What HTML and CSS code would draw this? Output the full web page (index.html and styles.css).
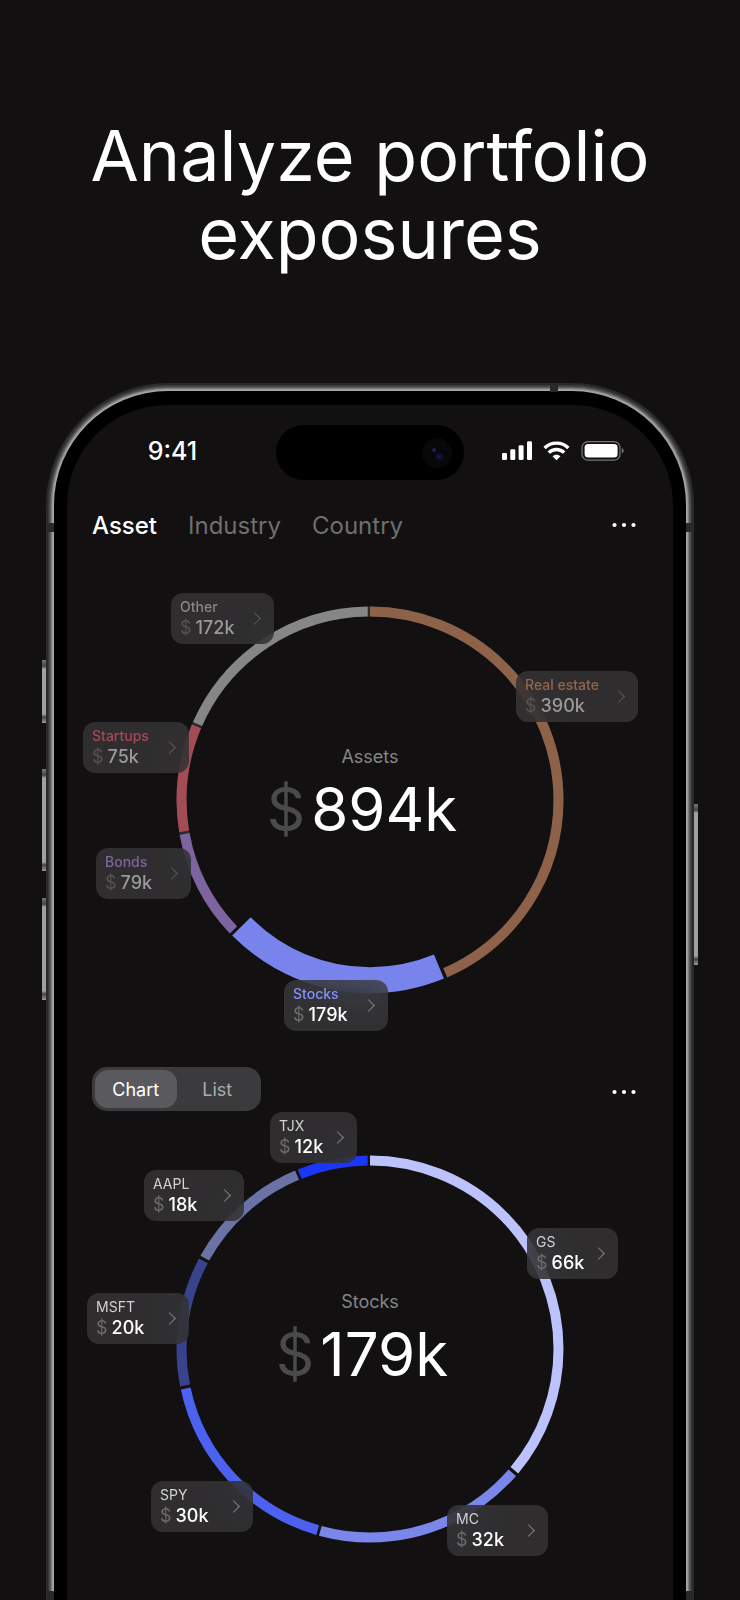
FILE: index.html
```html
<!DOCTYPE html>
<html lang="en">
<head>
  <meta charset="utf-8">
  <meta name="viewport" content="width=device-width, initial-scale=1">
  <title>Analyze portfolio exposures</title>
  <link rel="stylesheet" href="styles.css">
</head>
<body>
  <h1>Analyze portfolio<br>exposures</h1>

  <main class="phone">
    <span class="side-button action"></span>
    <span class="side-button volume-up"></span>
    <span class="side-button volume-down"></span>
    <span class="side-button power"></span>
    <span class="band band-top"></span>
    <span class="band band-left"></span>
    <span class="band band-right"></span>
    <span class="band band-left band-low"></span>
    <span class="band band-right band-low"></span>

    <div class="screen">
      <header class="status">
        <span class="time">9:41</span>
        <div class="island"><span class="camera"></span></div>
        <svg class="status-icons" width="122" height="20" viewBox="0 0 122 20">
          <g fill="#fff">
            <rect x="0" y="12" width="5" height="7" rx="1.3"/>
            <rect x="8.3" y="8.3" width="5" height="10.7" rx="1.3"/>
            <rect x="16.6" y="4.3" width="5" height="14.7" rx="1.3"/>
            <rect x="25" y="0.3" width="5" height="18.7" rx="1.3"/>
            <path d="M54.5 13.8c1.6 0 3 .6 4 1.500l-4 4-4-4c1-.9 2.400-1.500 4-1.500z"/>
            <rect x="82.600" y="3" width="33" height="13.600" rx="3.600"/>
          </g>
          <g fill="none" stroke="#fff" stroke-width="3.400">
            <path d="M42.600 7a17 17 0 0 1 23.800 0"/>
            <path d="M46.800 11.600a11 11 0 0 1 15.400 0"/>
          </g>
          <rect x="80" y="0.600" width="38" height="18.600" rx="6" fill="none" stroke="#77767a" stroke-width="1.200"/>
          <path d="M119.800 7v5.600c1.200-.5 1.900-1.600 1.900-2.800s-.7-2.300-1.900-2.800z" fill="#77767a"/>
        </svg>
      </header>

      <nav class="row">
        <div class="tabs">
          <button class="tab active">Asset</button>
          <button class="tab">Industry</button>
          <button class="tab">Country</button>
        </div>
        <button class="more" aria-label="More options">
          <svg width="24" height="6" viewBox="0 0 24 6" fill="#fff"><circle cx="2.500" cy="3" r="2.100"/><circle cx="12" cy="3" r="2.100"/><circle cx="21.500" cy="3" r="2.100"/></svg>
        </button>
      </nav>

      <section class="chart assets">
        <svg class="ring" viewBox="0 0 388 388">
          <circle class="track" cx="194" cy="194" r="188.500" stroke-width="10"/>
          <g fill="none" stroke-width="10" transform="rotate(-90 194 194)">
            <circle cx="194" cy="194" r="188.500" pathLength="360" stroke="#8e6149" stroke-dasharray="156.500 360"/>
            <circle cx="194" cy="194" r="180" pathLength="360" stroke="#121011" stroke-width="28" stroke-dasharray="70 360" stroke-dashoffset="-156.500"/>
            <circle cx="194" cy="194" r="180.200" pathLength="360" stroke="#7884ec" stroke-width="26" stroke-dasharray="68 360" stroke-dashoffset="-157.500"/>
            <circle cx="194" cy="194" r="188.500" pathLength="360" stroke="#7d649e" stroke-dasharray="33.200 360" stroke-dashoffset="-226.400"/>
            <circle cx="194" cy="194" r="188.500" pathLength="360" stroke="#a34c56" stroke-dasharray="32.600 360" stroke-dashoffset="-260.400"/>
            <circle cx="194" cy="194" r="188.500" pathLength="360" stroke="#868686" stroke-dasharray="65.500 360" stroke-dashoffset="-293.800"/>
          </g>
        </svg>
        <div class="total">
          <span class="total-label">Assets</span>
          <span class="total-value"><span class="currency">$</span>894k</span>
        </div>
        <button class="callout dim other"><span class="name">Other</span><span class="value"><span class="currency">$</span>172k</span></button>
        <button class="callout dim real-estate"><span class="name">Real estate</span><span class="value"><span class="currency">$</span>390k</span></button>
        <button class="callout dim startups"><span class="name">Startups</span><span class="value"><span class="currency">$</span>75k</span></button>
        <button class="callout dim bonds"><span class="name">Bonds</span><span class="value"><span class="currency">$</span>79k</span></button>
        <button class="callout stocks"><span class="name">Stocks</span><span class="value"><span class="currency">$</span>179k</span></button>
      </section>

      <div class="row view-row">
        <div class="switch">
          <button class="active">Chart</button>
          <button>List</button>
        </div>
        <button class="more" aria-label="More options">
          <svg width="24" height="6" viewBox="0 0 24 6" fill="#fff"><circle cx="2.500" cy="3" r="2.100"/><circle cx="12" cy="3" r="2.100"/><circle cx="21.500" cy="3" r="2.100"/></svg>
        </button>
      </div>

      <section class="chart holdings">
        <svg class="ring" viewBox="0 0 388 388">
          <g fill="none" stroke-width="10" transform="rotate(-90 194 194)">
            <circle cx="194" cy="194" r="188.500" pathLength="360" stroke="#bcc2fb" stroke-dasharray="130 360"/>
            <circle cx="194" cy="194" r="188.500" pathLength="360" stroke="#7b86ea" stroke-dasharray="64.300 360" stroke-dashoffset="-131"/>
            <circle cx="194" cy="194" r="188.500" pathLength="360" stroke="#4c61f0" stroke-dasharray="61.800 360" stroke-dashoffset="-196.100"/>
            <circle cx="194" cy="194" r="188.500" pathLength="360" stroke="#39428c" stroke-dasharray="39.100 360" stroke-dashoffset="-258.800"/>
            <circle cx="194" cy="194" r="188.500" pathLength="360" stroke="#6a72a6" stroke-dasharray="38.400 360" stroke-dashoffset="-298.800"/>
            <circle cx="194" cy="194" r="188.500" pathLength="360" stroke="#1c36f6" stroke-dasharray="21.200 360" stroke-dashoffset="-338.100"/>
          </g>
        </svg>
        <div class="total">
          <span class="total-label">Stocks</span>
          <span class="total-value"><span class="currency">$</span>179k</span>
        </div>
        <button class="callout tjx"><span class="name">TJX</span><span class="value"><span class="currency">$</span>12k</span></button>
        <button class="callout aapl"><span class="name">AAPL</span><span class="value"><span class="currency">$</span>18k</span></button>
        <button class="callout gs"><span class="name">GS</span><span class="value"><span class="currency">$</span>66k</span></button>
        <button class="callout msft"><span class="name">MSFT</span><span class="value"><span class="currency">$</span>20k</span></button>
        <button class="callout spy"><span class="name">SPY</span><span class="value"><span class="currency">$</span>30k</span></button>
        <button class="callout mc"><span class="name">MC</span><span class="value"><span class="currency">$</span>32k</span></button>
      </section>
    </div>
  </main>
</body>
</html>
```
FILE: styles.css
```css
* {
  box-sizing: border-box;
}

body {
  margin: 0;
  min-height: 100vh;
  display: flex;
  flex-direction: column;
  background-color: #121011;
  color: #fff;
  font-family: Inter, "Liberation Sans", sans-serif;
  overflow-x: hidden;
}

button {
  padding: 0;
  border: none;
  background: none;
  color: inherit;
  font: inherit;
  text-align: left;
  cursor: pointer;
}

h1 {
  margin: 0;
  padding: 117px 20px 118px;
  font-size: 70px;
  font-weight: 400;
  line-height: 78px;
  text-align: center;
}

/* phone body */
.phone {
  position: relative;
  flex: 1;
  display: flex;
  flex-direction: column;
  margin: 0 54px;
  padding: 14px 13px 0;
  background-color: #000;
  border-radius: 114px 114px 0 0;
  box-shadow: 0 0 0 1px #a6a6a6, 0 0 0 2px #9c9c9c, 0 0 0 3px #7c7c7c,
    0 0 0 4px #5c5c5c, 0 0 0 5px #484848, 0 0 0 6px #3a3a3a, 0 0 0 8px #2a292a;
}

.side-button {
  position: absolute;
  left: -12px;
  width: 4px;
  background: linear-gradient(#777, #444 6px, #a0a0a0 9px, #a0a0a0 calc(100% - 9px), #444 calc(100% - 6px), #999);
}

.action { top: 269px; height: 63px; }
.volume-up { top: 378px; height: 102px; }
.volume-down { top: 507px; height: 102px; }
.power { top: 413px; left: auto; right: -12px; height: 161px; }

.band {
  position: absolute;
  width: 8px;
  height: 9px;
  background-color: #2a292a;
}

.band-top { top: -8px; right: 128px; }
.band-left { top: 132px; left: -8px; }
.band-right { top: 132px; right: -8px; }
.band-low { top: 1200px; }

.screen {
  flex: 1;
  padding-top: 20px;
  background-color: #121011;
  border-radius: 100px 100px 0 0;
}

/* status bar */
.status {
  display: grid;
  grid-template-columns: 1fr 188px 1fr;
  align-items: start;
  height: 55px;
}

.time {
  padding-left: 2px;
  font-size: 25px;
  font-weight: 500;
  line-height: 52px;
  text-align: center;
}

.island {
  display: flex;
  align-items: center;
  justify-content: flex-end;
  height: 55px;
  padding-right: 12px;
  background-color: #000;
  border-radius: 28px;
}

.camera {
  width: 30px;
  height: 30px;
  border-radius: 50%;
  background: radial-gradient(circle at 40% 40%, #28306c 0, transparent 3px),
    radial-gradient(circle at 57% 62%, #141b4c 0, transparent 5px),
    radial-gradient(#05050c 7px, #08080a 9px);
}

.status-icons {
  margin: 16px 0 0 38px;
}

/* rows with a menu on the right */
.row {
  display: flex;
  align-items: center;
  justify-content: space-between;
  padding: 0 37px 0 25px;
}

nav.row {
  height: 40px;
  margin-top: 25px;
}

.view-row {
  align-items: flex-end;
}

.tabs {
  display: flex;
  gap: 31px;
}

.tab {
  padding-top: 2px;
  color: #6f6e70;
  font-size: 24px;
  line-height: 32px;
}

.tab.active {
  color: #fff;
  font-weight: 500;
}

.more {
  display: flex;
  padding: 16px 0;
}

.switch {
  display: flex;
  width: 169px;
  height: 44px;
  padding: 3px;
  background-color: #3b3b3d;
  border-radius: 15px;
}

.switch button {
  flex: 1;
  border-radius: 13px;
  color: #acacae;
  font-size: 18px;
  text-align: center;
}

.switch .active {
  background-color: #5a595e;
  color: #fff;
}

/* ring charts */
.chart {
  position: relative;
  display: grid;
  width: 388px;
  height: 388px;
  margin: 0 auto;
}

.assets {
  margin-top: 61px;
  margin-bottom: 73px;
}

.holdings {
  margin-top: 44px;
}

.ring,
.total {
  grid-area: 1 / 1;
}

.track {
  fill: none;
  stroke: #2c2b2c;
}

.total {
  display: flex;
  flex-direction: column;
  align-items: center;
  padding-top: 139px;
}

.holdings .total {
  padding-top: 135px;
}

.total-label {
  color: #868587;
  font-size: 18px;
  line-height: 24px;
}

.total-value {
  padding-right: 16px;
  font-size: 60px;
  line-height: 80px;
}

.total-value .currency {
  margin-right: 6px;
  color: #4a494b;
}

/* callouts */
.callout {
  position: absolute;
  display: flex;
  flex-direction: column;
  justify-content: flex-start;
  height: 51px;
  padding: 4px 9px 0;
  background-color: rgba(54, 53, 54, 0.82);
  backdrop-filter: blur(18px);
  border-radius: 12px;
}

/* chevron */
.callout::after {
  content: "";
  position: absolute;
  top: 21px;
  right: 15px;
  width: 8px;
  height: 8px;
  border-top: 1px solid #858487;
  border-right: 1px solid #858487;
  transform: rotate(45deg);
}

.name {
  color: #d2d1d3;
  font-size: 14px;
  line-height: 19px;
}

.value {
  color: #fff;
  font-size: 18px;
  font-weight: 500;
  line-height: 23px;
}

.value .currency {
  margin-right: 4px;
  color: #6c6b6d;
  font-weight: 400;
}

.assets .name {
  font-weight: 500;
}

.dim .value { color: #9a999b; }
.dim .currency { color: #545355; }
.dim::after { border-color: #5c5b5d; }

.other { left: -5px; top: -13px; width: 103px; }
.other .name { color: #868587; }
.real-estate { left: 340px; top: 65px; width: 122px; }
.real-estate .name { color: #94654c; }
.startups { left: -93px; top: 116px; width: 106px; }
.startups .name { color: #a74a57; }
.bonds { left: -80px; top: 242px; width: 95px; }
.bonds .name { color: #7f659f; }
.stocks { left: 108px; top: 374px; width: 104px; background-color: rgba(60, 59, 61, 0.74); }
.stocks .name { color: #8590fa; }

.tjx { left: 94px; top: -43px; width: 87px; }
.aapl { left: -32px; top: 15px; width: 100px; }
.gs { left: 351px; top: 73px; width: 91px; }
.msft { left: -89px; top: 138px; width: 102px; }
.spy { left: -25px; top: 326px; width: 102px; }
.mc { left: 271px; top: 350px; width: 101px; }
```
